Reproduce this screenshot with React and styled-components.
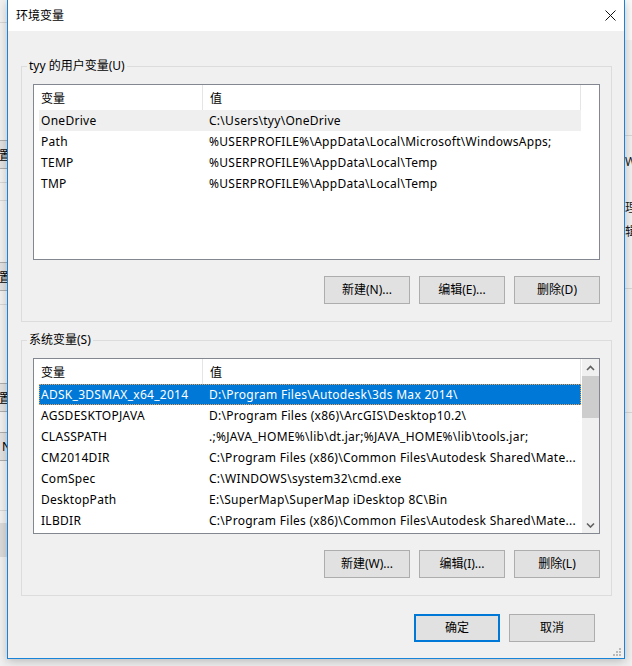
import React from 'react';
import styled, { createGlobalStyle } from 'styled-components';

const GlobalStyle = createGlobalStyle`
  html, body {
    margin: 0;
    padding: 0;
  }
  body {
    background: #f2f2f2;
    font-family: "Noto Sans", "Noto Sans CJK SC", sans-serif;
    font-size: 12px;
    color: #000;
    overflow: hidden;
  }
`;

const userVars = [
  { name: 'OneDrive', value: 'C:\\Users\\tyy\\OneDrive' },
  { name: 'Path', value: '%USERPROFILE%\\AppData\\Local\\Microsoft\\WindowsApps;' },
  { name: 'TEMP', value: '%USERPROFILE%\\AppData\\Local\\Temp' },
  { name: 'TMP', value: '%USERPROFILE%\\AppData\\Local\\Temp' },
];

const systemVars = [
  { name: 'ADSK_3DSMAX_x64_2014', value: 'D:\\Program Files\\Autodesk\\3ds Max 2014\\' },
  { name: 'AGSDESKTOPJAVA', value: 'D:\\Program Files (x86)\\ArcGIS\\Desktop10.2\\' },
  { name: 'CLASSPATH', value: '.;%JAVA_HOME%\\lib\\dt.jar;%JAVA_HOME%\\lib\\tools.jar;' },
  { name: 'CM2014DIR', value: 'C:\\Program Files (x86)\\Common Files\\Autodesk Shared\\Mate...' },
  { name: 'ComSpec', value: 'C:\\WINDOWS\\system32\\cmd.exe' },
  { name: 'DesktopPath', value: 'E:\\SuperMap\\SuperMap iDesktop 8C\\Bin' },
  { name: 'ILBDIR', value: 'C:\\Program Files (x86)\\Common Files\\Autodesk Shared\\Mate...' },
];

export default function App() {
  return (
    <>
      <GlobalStyle />
      <Screen>
        <BackdropLeft>
          <GhostLine $top={22} />
          <GhostButton $top={117}><span>置</span></GhostButton>
          <GhostLine $top={13} />
          <GhostLine $top={17} />
          <GhostButton $top={61}><span>置</span></GhostButton>
          <GhostLine $top={13} />
          <GhostButton $top={78}><span>置</span></GhostButton>
          <GhostButton $top={20}><span>N</span></GhostButton>
          <GhostLine $top={49} />
          <GhostShade />
        </BackdropLeft>

        <Dialog>
          <TitleBar>
            <Title>环境变量</Title>
            <CloseIcon />
          </TitleBar>

          <Body>
            <VarGroup
              title="tyy 的用户变量(U)"
              vars={userVars}
              activeRow={0}
              focused={false}
              buttons={['新建(N)...', '编辑(E)...', '删除(D)']}
            />
            <VarGroup
              title="系统变量(S)"
              vars={systemVars}
              activeRow={0}
              focused
              scroll
              buttons={['新建(W)...', '编辑(I)...', '删除(L)']}
              $spaced
            />
            <Footer>
              <Button $primary>确定</Button>
              <Button>取消</Button>
            </Footer>
          </Body>

          <Grip viewBox="0 0 9 9" width="9" height="9">
            {[[7, 1], [4, 4], [7, 4], [1, 7], [4, 7], [7, 7]].map(([x, y]) => (
              <rect key={`${x}-${y}`} x={x - 1} y={y - 1} width="2" height="2" fill="#b9b9b9" />
            ))}
          </Grip>
        </Dialog>

        <BackdropRight>
          <GhostPane />
          <GhostLine $top={95} />
          <GhostText $top={18}>W</GhostText>
          <GhostText $top={30}>理</GhostText>
          <GhostText $top={8}>辑</GhostText>
          <GhostLine $top={48} />
          <GhostLine $top={123} />
        </BackdropRight>
      </Screen>
    </>
  );
}

function VarGroup({ title, vars, activeRow, focused, scroll, buttons, $spaced }) {
  return (
    <Group $spaced={$spaced}>
      <Legend>{title}</Legend>
      <ListView>
        <ListBody>
          <Header>
            <HeaderCell>变量</HeaderCell>
            <HeaderCell>值</HeaderCell>
          </Header>
          {vars.map((v, i) => (
            <Row
              key={v.name}
              $state={i === activeRow ? (focused ? 'selected' : 'inactive') : 'none'}
            >
              <NameCell>{v.name}</NameCell>
              <ValueCell>{v.value}</ValueCell>
            </Row>
          ))}
        </ListBody>
        {scroll && (
          <ScrollBar>
            <ScrollArrow>
              <Chevron d="M1 5 L4.5 1.5 L8 5" />
            </ScrollArrow>
            <Thumb />
            <Track />
            <ScrollArrow>
              <Chevron d="M1 1.5 L4.5 5 L8 1.5" />
            </ScrollArrow>
          </ScrollBar>
        )}
      </ListView>
      <ButtonRow>
        {buttons.map((b) => (
          <Button key={b}>{b}</Button>
        ))}
      </ButtonRow>
    </Group>
  );
}

function CloseIcon() {
  return (
    <CloseSvg viewBox="0 0 11 11" width="11" height="11">
      <path d="M0.5 0.5 L10.5 10.5 M10.5 0.5 L0.5 10.5" stroke="#111" strokeWidth="1" fill="none" />
    </CloseSvg>
  );
}

function Chevron({ d }) {
  return (
    <svg viewBox="0 0 9 6" width="9" height="6">
      <path d={d} stroke="#606060" strokeWidth="1.6" fill="none" />
    </svg>
  );
}

const Screen = styled.div`
  display: flex;
  width: 632px;
  height: 666px;
  overflow: hidden;
`;

const BackdropLeft = styled.div`
  width: 7px;
  flex: none;
  display: flex;
  flex-direction: column;
  background: #f0f0f0;
  overflow: hidden;
`;

const BackdropRight = styled.div`
  flex: 1;
  display: flex;
  flex-direction: column;
  background: #f0f0f0;
  overflow: hidden;
`;

const GhostLine = styled.div`
  height: 1px;
  background: #d6d6d6;
  margin-top: ${(p) => p.$top}px;
  flex: none;
`;

const GhostPane = styled.div`
  height: 40px;
  background: #f9f9f9;
  flex: none;
`;

const GhostButton = styled.div`
  height: 27px;
  margin-top: ${(p) => p.$top}px;
  background: #e1e1e1;
  border-top: 1px solid #adadad;
  border-bottom: 1px solid #adadad;
  display: flex;
  align-items: center;
  justify-content: flex-end;
  flex: none;

  span {
    margin-right: -4px;
    white-space: nowrap;
  }
`;

const GhostShade = styled.div`
  height: 34px;
  margin-top: 12px;
  background: #dadada;
  flex: none;
`;

const GhostText = styled.div`
  margin-top: ${(p) => p.$top}px;
  line-height: 16px;
  white-space: nowrap;
  color: #1a1a1a;
  flex: none;
`;

const Dialog = styled.div`
  position: relative;
  z-index: 1;
  flex: none;
  width: 618px;
  height: 659px;
  box-sizing: border-box;
  border: 1px solid #1883d7;
  border-top: none;
  background: #f0f0f0;
  display: flex;
  flex-direction: column;
  box-shadow: 0 3px 9px rgba(0, 0, 0, 0.22);
`;

const TitleBar = styled.div`
  height: 31px;
  flex: none;
  background: #fff;
  display: flex;
  align-items: center;
  justify-content: space-between;
  padding: 0 8px 0 8px;
`;

const Title = styled.div`
  font-size: 12px;
  line-height: 16px;
  margin-top: 1px;
`;

const CloseSvg = styled.svg`
  display: block;
`;

const Body = styled.div`
  flex: 1;
  display: flex;
  flex-direction: column;
  padding: 27px 12px 16px 13px;
`;

const Group = styled.fieldset`
  margin: ${(p) => (p.$spaced ? '10px' : '0')} 0 0 0;
  padding: 10px 11px 17px 11px;
  border: 1px solid #dcdcdc;
  min-width: 0;
`;

const Legend = styled.legend`
  padding: 0 2px;
  margin-left: -6px;
  font-size: 12px;
  line-height: 16px;
  color: #000;
`;

const ListView = styled.div`
  height: 176px;
  box-sizing: border-box;
  border: 1px solid #828790;
  background: #fff;
  display: flex;
`;

const ListBody = styled.div`
  flex: 1;
  min-width: 0;
  overflow: hidden;
`;

const Header = styled.div`
  display: grid;
  grid-template-columns: 169px 378px;
  height: 25px;
`;

const HeaderCell = styled.div`
  border-right: 1px solid #e5e5e5;
  padding-left: 7px;
  display: flex;
  align-items: center;
  white-space: nowrap;
`;

const rowColors = {
  none: 'transparent',
  inactive: '#efefef',
  selected: '#0078d7',
};

const Row = styled.div`
  display: grid;
  grid-template-columns: 164px 378px;
  margin-left: 5px;
  width: 542px;
  height: 21px;
  box-sizing: border-box;
  align-items: center;
  background: ${(p) => rowColors[p.$state]};
  color: ${(p) => (p.$state === 'selected' ? '#fff' : '#000')};
  outline: ${(p) => (p.$state === 'selected' ? '1px dotted #f5a04a' : 'none')};
  outline-offset: -1px;
`;

const NameCell = styled.div`
  padding-left: 2px;
  letter-spacing: 0.28px;
  white-space: nowrap;
  overflow: hidden;
`;

const ValueCell = styled.div`
  padding-left: 6px;
  letter-spacing: 0.28px;
  white-space: nowrap;
  overflow: hidden;
`;

const ScrollBar = styled.div`
  width: 17px;
  flex: none;
  background: #f0f0f0;
  display: flex;
  flex-direction: column;
`;

const ScrollArrow = styled.div`
  height: 17px;
  flex: none;
  display: flex;
  align-items: center;
  justify-content: center;

  svg {
    display: block;
  }
`;

const Thumb = styled.div`
  height: 42px;
  flex: none;
  background: #cdcdcd;
`;

const Track = styled.div`
  flex: 1;
`;

const ButtonRow = styled.div`
  display: flex;
  justify-content: flex-end;
  gap: 9px;
  margin-top: 16px;
`;

const Button = styled.button`
  width: 86px;
  height: 28px;
  box-sizing: border-box;
  padding: 0;
  background: #e1e1e1;
  border: ${(p) => (p.$primary ? '2px solid #0078d7' : '1px solid #adadad')};
  font-family: "Noto Sans", "Noto Sans CJK SC", sans-serif;
  font-size: 12px;
  color: #000;
  line-height: 16px;
`;

const Footer = styled.div`
  display: flex;
  justify-content: flex-end;
  gap: 9px;
  margin-top: 18px;
  margin-right: 17px;
`;

const Grip = styled.svg`
  position: absolute;
  right: 2px;
  bottom: 1px;
  display: block;
`;
